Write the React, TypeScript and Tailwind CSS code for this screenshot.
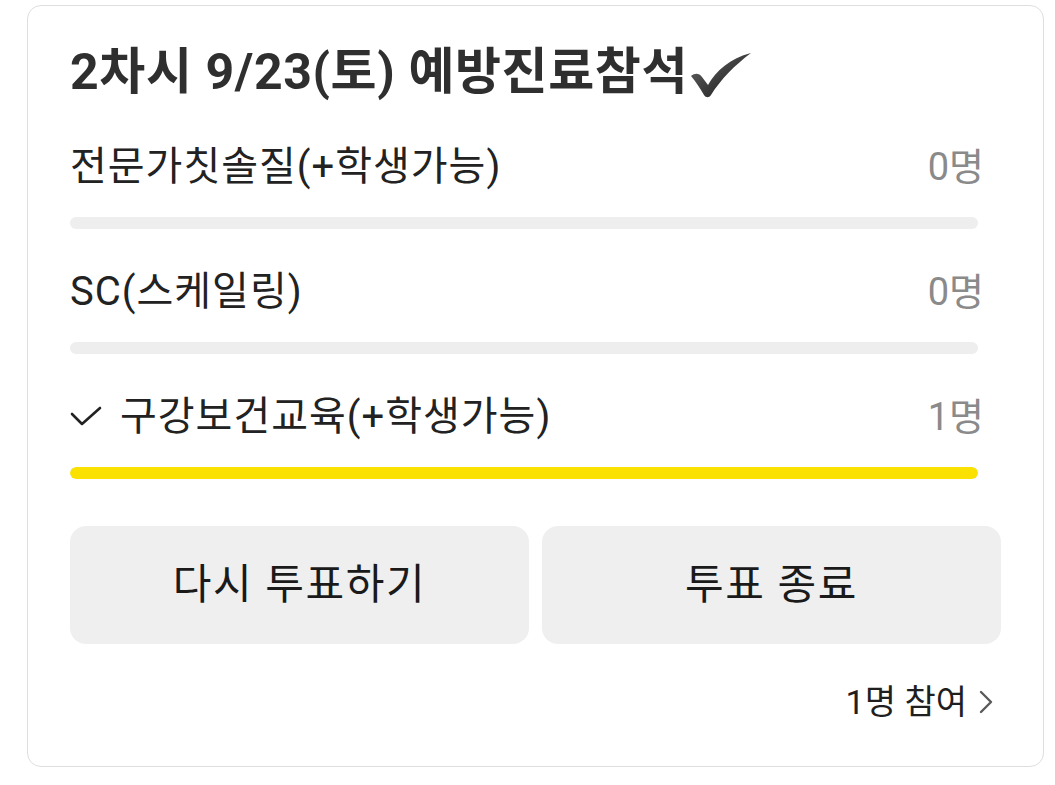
import React from 'react';

type Option = {
  label: string;
  count: number;
  voted?: boolean;
};

const OPTIONS: Option[] = [
  { label: '전문가칫솔질(+학생가능)', count: 0 },
  { label: 'SC(스케일링)', count: 0 },
  { label: '구강보건교육(+학생가능)', count: 1, voted: true },
];

const TOTAL = 1;

function HeavyCheck() {
  return (
    <svg width="62" height="46" viewBox="0 0 62 46" className="ml-[2px] mt-[6px] shrink-0">
      <defs>
        <linearGradient id="chk" x1="0" y1="0" x2="1" y2="1">
          <stop offset="0%" stopColor="#6a6a6a" />
          <stop offset="55%" stopColor="#3a3a3a" />
          <stop offset="100%" stopColor="#1f1f1f" />
        </linearGradient>
      </defs>
      <path
        d="M1 24 C5 21 9 21 12 25 L18 33 C26 19 40 6 61 1 C45 13 31 27 21 43 C19 46 16 46 14 43 C10 36 6 30 1 24 Z"
        fill="url(#chk)"
      />
    </svg>
  );
}

function SmallCheck() {
  return (
    <svg width="32" height="22" viewBox="0 0 32 22" className="mr-[18px] shrink-0">
      <polyline
        points="2,8 12,18 30,2"
        fill="none"
        stroke="#222222"
        strokeWidth="2.6"
        strokeLinecap="round"
        strokeLinejoin="round"
      />
    </svg>
  );
}

function OptionRow({ option }: { option: Option }) {
  const pct = TOTAL > 0 ? (option.count / TOTAL) * 100 : 0;
  return (
    <div className="pb-[33px]">
      <div className="flex items-center justify-between h-[60px] pr-[17px]">
        <div className="flex items-center text-[40px] tracking-[1px] text-[#222222] leading-none">
          {option.voted && <SmallCheck />}
          <span>{option.label}</span>
        </div>
        <span className="text-[38px] text-[#8a8a8a] leading-none">{option.count}명</span>
      </div>
      <div className="mt-[20px] mr-[23px] h-[12px] rounded-[6px] bg-[#eeeeee] overflow-hidden">
        <div className="h-full rounded-[6px] bg-[#fae100]" style={{ width: `${pct}%` }} />
      </div>
    </div>
  );
}

export default function App() {
  return (
    <div
      className="min-h-[785px] bg-white pt-[5px] pl-[27px]"
      style={{ fontFamily: 'Roboto, "Noto Sans CJK KR", "Noto Sans", sans-serif' }}
    >
      <div className="w-[1017px] border border-[#dedede] rounded-[14px] px-[42px] pt-[39px] pb-[44px] bg-white">
        {/* Title */}
        <div className="flex items-center h-[54px]">
          <h1 className="text-[50px] font-bold text-[#2f2f2f] leading-none tracking-[0.6px]">
            2차시 9/23(토) 예방진료참석
          </h1>
          <HeavyCheck />
        </div>

        {/* Options */}
        <div className="mt-[38px]">
          {OPTIONS.map((o) => (
            <OptionRow key={o.label} option={o} />
          ))}
        </div>

        {/* Buttons */}
        <div className="flex gap-[13px] mt-[14px]">
          <button className="flex-1 h-[118px] rounded-[16px] bg-[#efefef] text-[42px] tracking-[1.6px] text-[#1a1a1a] leading-none">
            다시 투표하기
          </button>
          <button className="flex-1 h-[118px] rounded-[16px] bg-[#efefef] text-[42px] tracking-[1.6px] text-[#1a1a1a] leading-none">
            투표 종료
          </button>
        </div>

        {/* Footer */}
        <div className="flex justify-end items-center h-[40px] mt-[38px] pr-[8px]">
          <span className="text-[34px] text-[#1f1f1f] leading-none">{TOTAL}명 참여</span>
          <svg width="14" height="24" viewBox="0 0 14 24" className="ml-[12px]">
            <polyline
              points="2,2 12,12 2,22"
              fill="none"
              stroke="#5a5a5a"
              strokeWidth="2.4"
              strokeLinecap="round"
              strokeLinejoin="round"
            />
          </svg>
        </div>
      </div>
    </div>
  );
}
